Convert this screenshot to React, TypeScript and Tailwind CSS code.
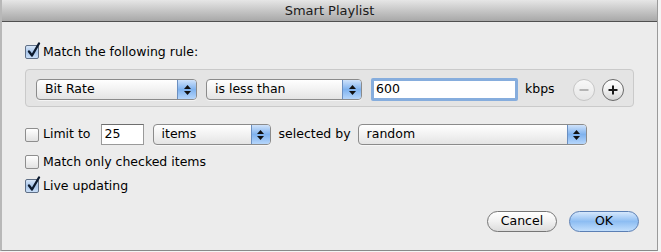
import React from "react";

function Checkbox({ checked }: { checked?: boolean }) {
  return (
    <div
      className={
        "relative w-[14px] h-[14px] rounded-[2px] border shrink-0 " +
        (checked
          ? "border-[#5f6f86] bg-gradient-to-b from-[#d7e6f8] via-[#a9c6ea] to-[#c9def7]"
          : "border-[#8e8e8e] bg-gradient-to-b from-[#ffffff] via-[#f0f0f0] to-[#e2e2e2]")
      }
    >
      {checked && (
        <svg className="absolute -top-[4px] left-[1px]" width="14" height="16" viewBox="0 0 14 16">
          <path d="M2 9.5 L5 13.5 L12 1.5" stroke="#0c1a2e" strokeWidth="2.3" fill="none" strokeLinecap="round" strokeLinejoin="round" />
        </svg>
      )}
    </div>
  );
}

function Popup({ label, width }: { label: string; width: string }) {
  return (
    <div
      className={
        width +
        " h-[21px] flex rounded-[4px] border border-[#8b8b8b] bg-gradient-to-b from-[#ffffff] via-[#f2f2f2] to-[#e4e4e4] shadow-[0_1px_0_rgba(255,255,255,0.6)] overflow-hidden shrink-0"
      }
    >
      <div className="flex-1 flex items-center pl-[8px] text-black">{label}</div>
      <div className="w-[19px] flex flex-col items-center justify-center gap-[2px] border-l border-[#6b8fc0] bg-gradient-to-b from-[#cfe2fa] via-[#7fb2ee] to-[#b6d6fb]">
        <svg width="7" height="4" viewBox="0 0 7 4">
          <path d="M0 4 L3.5 0 L7 4 Z" fill="#111" />
        </svg>
        <svg width="7" height="4" viewBox="0 0 7 4">
          <path d="M0 0 L7 0 L3.5 4 Z" fill="#111" />
        </svg>
      </div>
    </div>
  );
}

function RoundButton({ kind, enabled }: { kind: "plus" | "minus"; enabled?: boolean }) {
  const stroke = enabled ? "#1a1a1a" : "#b4b4b4";
  return (
    <div
      className={
        "w-[22px] h-[22px] rounded-full border flex items-center justify-center shrink-0 " +
        (enabled
          ? "border-[#6a6a6a] bg-gradient-to-b from-[#ffffff] via-[#f0f0f0] to-[#d4d4d4]"
          : "border-[#c6c6c6] bg-gradient-to-b from-[#f8f8f8] to-[#e6e6e6]")
      }
    >
      <svg width="12" height="12" viewBox="0 0 12 12">
        <path d="M1.5 6 H10.5" stroke={stroke} strokeWidth="2" />
        {kind === "plus" && <path d="M6 1.5 V10.5" stroke={stroke} strokeWidth="2" />}
      </svg>
    </div>
  );
}

export default function App() {
  return (
    <div className="w-[661px] h-[252px] bg-[#f4f4f4] font-['Lucida_Grande','DejaVu_Sans',sans-serif] text-[12.5px] text-black">
      <div className="w-[658px] h-[251px] flex flex-col border-l-2 border-r border-b border-l-[#b8b8b8] border-r-[#9a9a9a] border-b-[#8a8a8a] bg-[#ececec]">
        <div className="h-[22px] flex items-center justify-center bg-gradient-to-b from-[#e6e6e6] to-[#a8a8a8] border-b border-[#505050] text-[#1a1a1a] text-[13px]">
          Smart Playlist
        </div>

        <div className="flex items-center h-[18px] mt-[21px] pl-[23px] gap-[4px]">
          <Checkbox checked />
          <span>Match the following rule:</span>
        </div>

        <div className="mt-[8px] ml-[23px] w-[609px] h-[38px] rounded-[4px] border border-[#cacaca] bg-[#e4e4e4] flex items-start pt-[9px] pl-[10px]">
          <Popup label="Bit Rate" width="w-[161px]" />
          <div className="w-[9px]" />
          <Popup label="is less than" width="w-[156px]" />
          <div className="w-[9px]" />
          <div className="w-[147px] h-[23px] -mt-[1px] rounded-[2px] border-[3px] border-[#86addd] bg-white flex items-center pl-[2px] shrink-0">
            600
          </div>
          <span className="ml-[7px] h-[21px] flex items-center">kbps</span>
          <div className="ml-[18px] flex gap-[7px]">
            <RoundButton kind="minus" />
            <RoundButton kind="plus" enabled />
          </div>
        </div>

        <div className="mt-[17px] pl-[23px] h-[21px] flex items-center">
          <Checkbox />
          <span className="ml-[4px]">Limit to</span>
          <div className="ml-[10px] w-[43px] h-[21px] border border-[#9a9a9a] border-t-[#6e6e6e] bg-white flex items-center pl-[3px] shrink-0">
            25
          </div>
          <div className="w-[9px]" />
          <Popup label="items" width="w-[118px]" />
          <span className="ml-[8px]">selected by</span>
          <div className="ml-[7px]">
            <Popup label="random" width="w-[229px]" />
          </div>
        </div>

        <div className="mt-[8px] pl-[23px] h-[18px] flex items-center gap-[4px]">
          <Checkbox />
          <span>Match only checked items</span>
        </div>

        <div className="mt-[6px] pl-[23px] h-[18px] flex items-center gap-[4px]">
          <Checkbox checked />
          <span>Live updating</span>
        </div>

        <div className="mt-[16px] pr-[18px] flex justify-end gap-[12px]">
          <button className="w-[70px] h-[21px] rounded-full border border-[#767676] bg-gradient-to-b from-[#ffffff] via-[#f1f1f1] to-[#dcdcdc] flex items-center justify-center">
            Cancel
          </button>
          <button className="w-[70px] h-[21px] rounded-full border border-[#5b7fb4] bg-gradient-to-b from-[#d6e8fc] via-[#8dbdf2] to-[#c1defc] flex items-center justify-center">
            OK
          </button>
        </div>
      </div>
    </div>
  );
}
